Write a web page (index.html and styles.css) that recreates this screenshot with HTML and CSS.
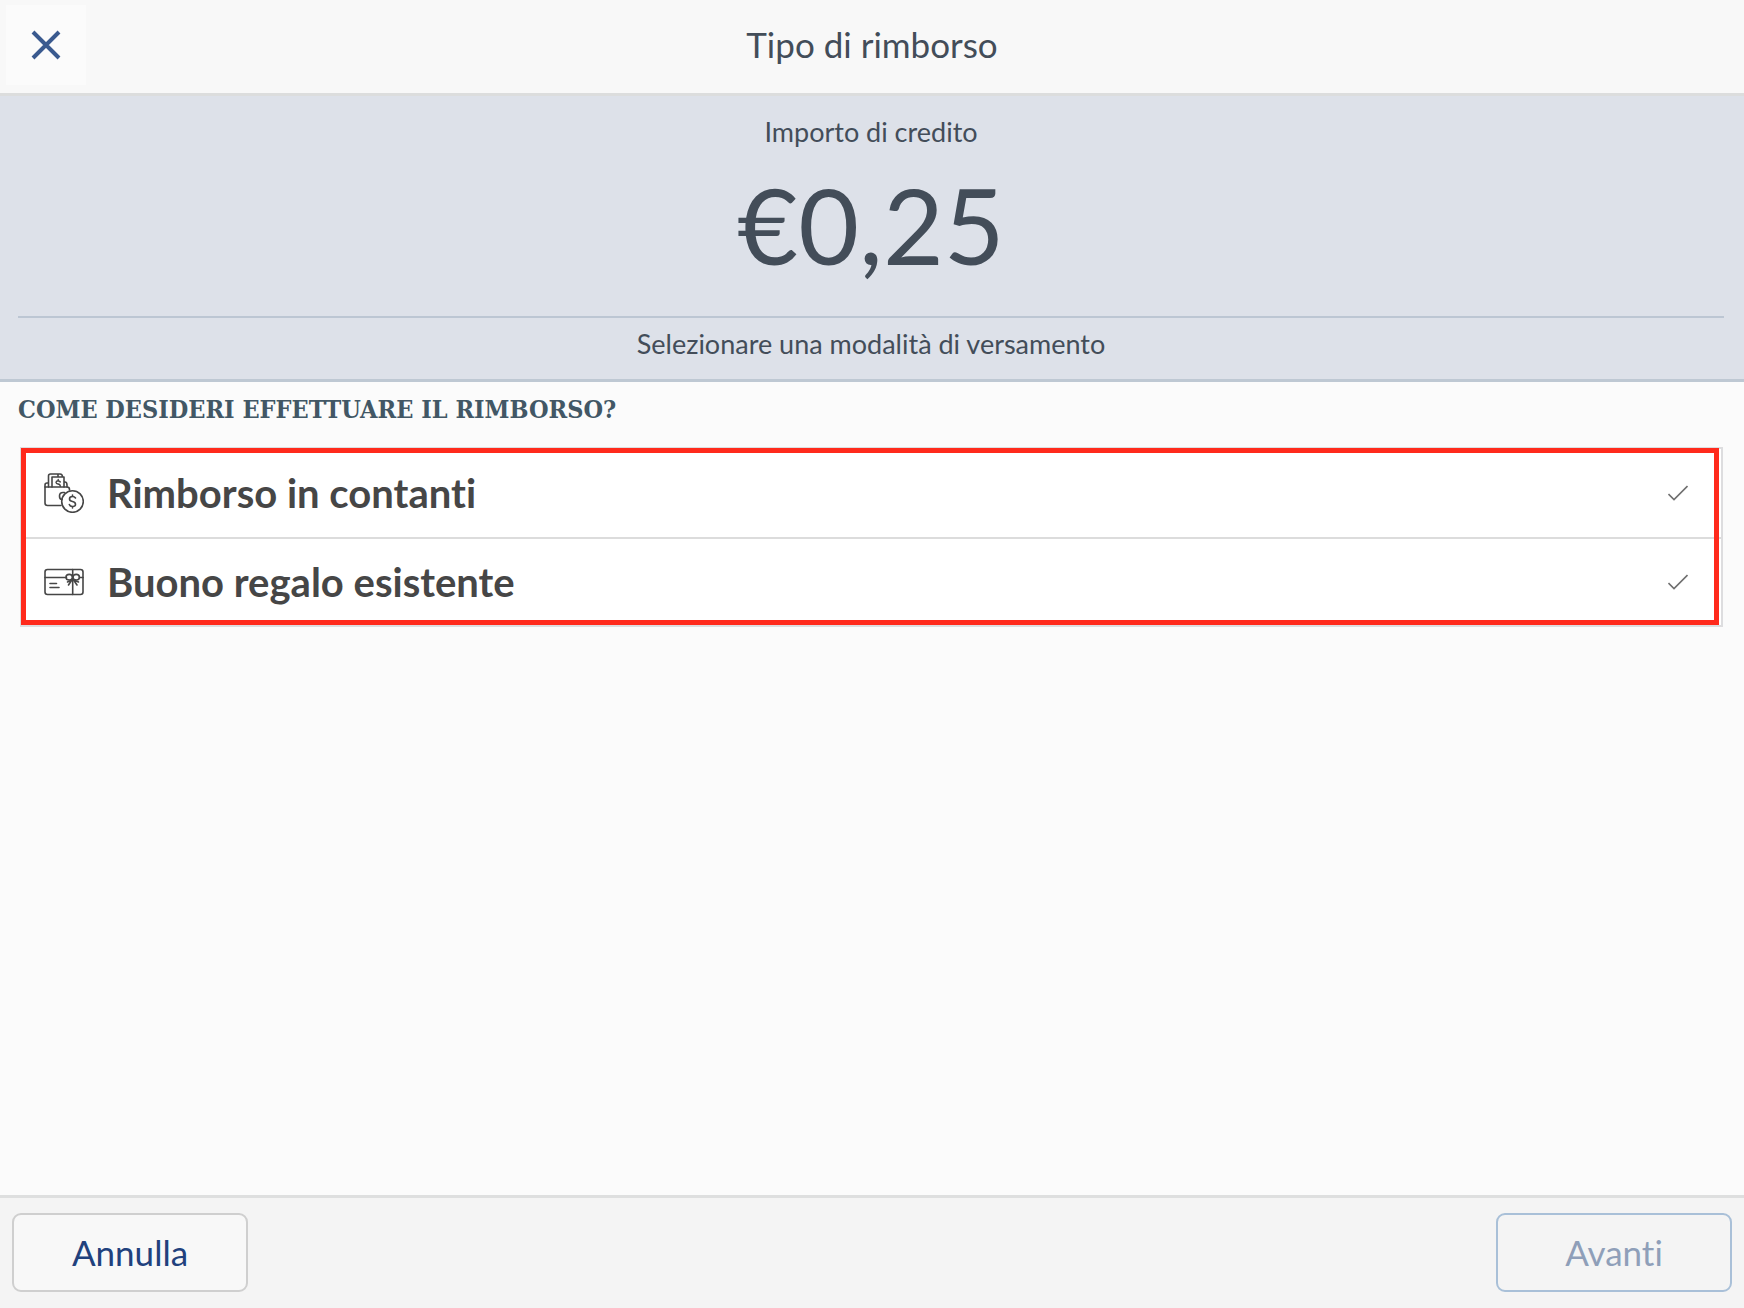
FILE: index.html
```html
<!DOCTYPE html>
<html lang="it">
<head>
<meta charset="utf-8">
<meta name="viewport" content="width=device-width, initial-scale=1">
<title>Tipo di rimborso</title>
<link rel="stylesheet" href="styles.css">
</head>
<body>
<header class="topbar">
  <button class="close" type="button" aria-label="Chiudi">
    <svg width="30" height="30" viewBox="0 0 30 30" fill="none" stroke="currentColor" stroke-width="4"><path d="M2 2 28 28M28 2 2 28"/></svg>
  </button>
  <h1 class="title">Tipo di rimborso</h1>
</header>
<section class="summary">
  <p class="label">Importo di credito</p>
  <p class="amount">€0,25</p>
  <p class="label hint">Selezionare una modalità di versamento</p>
</section>
<main class="content">
  <h2 class="question">COME DESIDERI EFFETTUARE IL RIMBORSO?</h2>
  <div class="options">
    <button class="option" type="button">
      <svg class="icon" width="40" height="40" viewBox="0 0 40 40" fill="none" stroke="currentColor" stroke-width="1.6" stroke-linejoin="round" stroke-linecap="round">
        <path d="M17 32.500H3.500Q1 32.500 1 30V14H23Q25.500 14 25.500 16.500V17"/>
        <path d="M1 14V12Q1 10 3 10H4.500V14M4.500 10V3Q4.500 1 6.500 1H16Q18.500 1 18.500 4M8 14V4H20V14M14 3V1M20 9H21Q23 9 23 12V14"/>
        <path stroke-width="1.4" d="M16.300 9Q15.500 7.800 14 7.800 12 8 12 9.500 12.200 10.800 14 11 16.300 11.300 16.300 13.300M14.200 6.500V7.800"/>
        <path d="M20.500 19.500H19Q15.500 19.500 15.500 23T18 26.500"/>
        <circle cx="28.500" cy="28.500" r="10.800"/>
        <path d="M31.500 25Q30.500 23.500 28.500 23.500 25.500 23.500 25.500 26 25.500 28 28.500 28.500 31.500 29 31.500 31.500 31.500 33.500 28.500 33.500 26 33.500 25.300 31.500M28.500 22V23.500M28.500 33.500V35"/>
      </svg>
      <span>Rimborso in contanti</span>
      <svg class="check" width="20" height="16" viewBox="0 0 20 16" fill="none" stroke="currentColor" stroke-width="1.6"><path d="M.5 9 6 14.500 19.500 1"/></svg>
    </button>
    <button class="option" type="button">
      <svg class="icon" width="40" height="40" viewBox="0 0 40 40" fill="none" stroke="currentColor" stroke-width="1.6" stroke-linejoin="round" stroke-linecap="round">
        <rect x="1" y="7.500" width="38" height="25" rx="2.500"/>
        <path d="M1 15.500H22.500M35.500 15.500H39M28.700 7.500V32.500M6 21.500H12.500M6 25.500H15"/>
        <ellipse cx="25.200" cy="15.200" rx="3.200" ry="2.800"/><ellipse cx="32.200" cy="15.200" rx="3.200" ry="2.800"/>
        <path d="M28.200 17.500 24.500 23M29.200 17.500 33 23M28 18 23.500 20M29.500 18 34.500 20"/>
      </svg>
      <span>Buono regalo esistente</span>
      <svg class="check" width="20" height="16" viewBox="0 0 20 16" fill="none" stroke="currentColor" stroke-width="1.6"><path d="M.5 9 6 14.500 19.500 1"/></svg>
    </button>
  </div>
</main>
<footer class="actions">
  <button class="action" type="button">Annulla</button>
  <button class="action next" type="button" disabled>Avanti</button>
</footer>
</body>
</html>
```
FILE: styles.css
```css
* { box-sizing: border-box; }

body {
  margin: 0;
  min-height: 100vh;
  display: flex;
  flex-direction: column;
  background: #fbfbfb;
  color: #434d59;
  font-family: Lato, sans-serif;
  font-variant-ligatures: none;
}

h1, h2, p { margin: 0; font-weight: 400; }

button {
  font-family: inherit;
  font-variant-ligatures: inherit;
  cursor: pointer;
}

.topbar {
  display: grid;
  grid-template-columns: 80px 1fr 80px;
  align-items: center;
  height: 96px;
  padding: 0 6px 4px;
  background: #f8f8f8;
  border-bottom: 3px solid #dcdddd;
}

.close {
  display: grid;
  place-items: center;
  height: 80px;
  padding: 0;
  border: 0;
  background: #fbfbfb;
  color: #3a5a8f;
}

.title {
  padding-bottom: 2px;
  font-size: 35px;
  line-height: 48px;
  text-align: center;
}

.summary {
  padding: 16px 20px 0 18px;
  background: #dde1e9;
  border-bottom: 3px solid #bec8d3;
  text-align: center;
}

.label { font-size: 27px; line-height: 40px; }

.amount {
  padding: 12px 0 32px;
  font-size: 105px;
  line-height: 120px;
}

.hint {
  height: 63px;
  padding-top: 6px;
  border-top: 2px solid #bcc6d3;
}

.content { flex: 1; padding: 10px 21px 10px 20px; }

.question {
  margin-left: -2px;
  font-family: "DejaVu Serif Condensed", "DejaVu Serif", serif;
  font-size: 25px;
  line-height: 36px;
  font-weight: 700;
  color: #425765;
}

.options {
  position: relative;
  margin-top: 19px;
  border: 2px solid #dddddf;
  background: #fff;
}

/* highlight frame drawn over the list */
.options::after {
  content: "";
  position: absolute;
  inset: -1px 2px 0 -1px;
  border: 5px solid #ff2a1c;
  pointer-events: none;
}

.option {
  display: flex;
  align-items: center;
  gap: 23px;
  width: 100%;
  height: 88px;
  padding: 0 33px 0 22px;
  border: 0;
  background: none;
  color: #464646;
  font-size: 40px;
  line-height: 48px;
  font-weight: 700;
}

.option + .option { border-top: 2px solid #dcdcdc; }

.check { margin-left: auto; color: #707070; }

.actions {
  display: flex;
  justify-content: space-between;
  padding: 15px 12px 16px;
  background: #f4f4f4;
  border-top: 3px solid #dedfdf;
}

.action {
  width: 236px;
  height: 79px;
  padding-bottom: 3px;
  border: 2px solid #cfcfcf;
  border-radius: 9px;
  background: #f8f8f8;
  color: #21417d;
  font-size: 35px;
  line-height: 48px;
}

.next {
  border-color: #a9c0d8;
  background: #f4f4f4;
  color: #8f9fb9;
  cursor: default;
}
```
